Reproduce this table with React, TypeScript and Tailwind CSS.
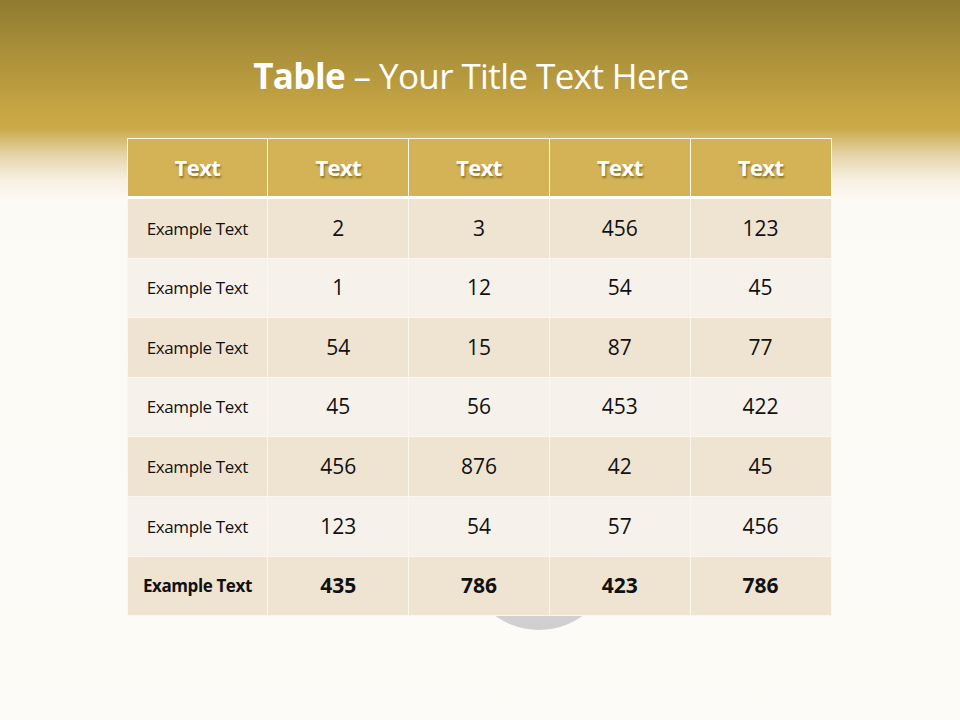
import React from "react";

const rows: string[][] = [
  ["Example Text", "2", "3", "456", "123"],
  ["Example Text", "1", "12", "54", "45"],
  ["Example Text", "54", "15", "87", "77"],
  ["Example Text", "45", "56", "453", "422"],
  ["Example Text", "456", "876", "42", "45"],
  ["Example Text", "123", "54", "57", "456"],
  ["Example Text", "435", "786", "423", "786"],
];

export default function App() {
  return (
    <div
      className="relative w-[960px] h-[720px] overflow-hidden"
      style={{
        fontFamily: '"Open Sans", "Noto Sans", sans-serif',
        background:
          "linear-gradient(to bottom, #8f7a30 0px, #a98f39 50px, #c6a544 110px, #caa946 128px, #e6d4a8 155px, #f7f1e2 180px, #fcfaf5 200px, #fcfbf7 720px)",
      }}
    >
      <div className="absolute left-[464px] top-[480px] w-[150px] h-[150px] rounded-full bg-gradient-to-b from-[#e6e6e6] to-[#cfcfcf]" />
      <div className="relative flex flex-col items-center">
        <h1 className="mt-[53px] ml-[-18px] h-[46px] text-[35px] leading-[46px] text-white tracking-[-0.6px]">
          <span className="font-bold">Table</span>
          <span> – Your Title Text Here</span>
        </h1>
        <div className="mt-[39px] ml-[-2px] w-[705px] bg-[#fbf7ee] p-px flex flex-col">
          <div className="grid grid-cols-5 gap-px h-[57px]">
            {["Text", "Text", "Text", "Text", "Text"].map((t, i) => (
              <div
                key={i}
                className="bg-[#d3b355] flex items-center justify-center text-white font-bold text-[22px] tracking-[-0.6px]"
                style={{ textShadow: "1px 2px 2px rgba(80,60,10,0.55)" }}
              >
                {t}
              </div>
            ))}
          </div>
          <div className="h-[3px] bg-white" />
          <div className="flex flex-col gap-px">
            {rows.map((r, ri) => {
              const last = ri === rows.length - 1;
              const bg = ri % 2 === 0 ? "bg-[#efe4d2]" : "bg-[#f6f2eb]";
              return (
                <div key={ri} className="grid grid-cols-5 gap-px h-[58.6px]">
                  {r.map((c, ci) => (
                    <div
                      key={ci}
                      className={`${bg} flex items-center justify-center text-[#111] ${
                        ci === 0 ? "text-[17px] tracking-[-0.4px]" : "text-[21px]"
                      } ${last ? "font-bold" : ""}`}
                    >
                      {c}
                    </div>
                  ))}
                </div>
              );
            })}
          </div>
        </div>
      </div>
    </div>
  );
}
